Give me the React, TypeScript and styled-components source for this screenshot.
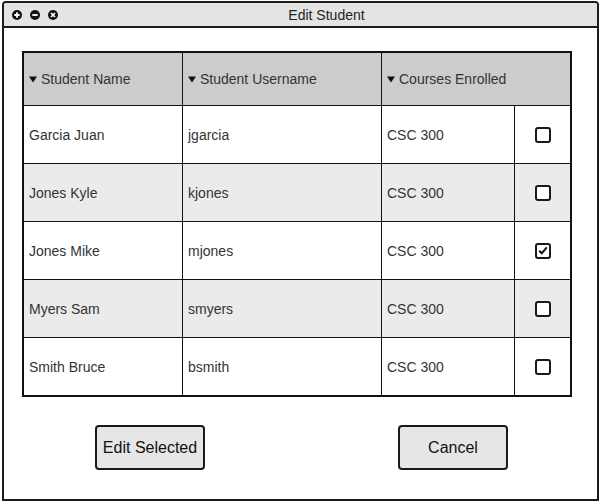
import React from "react";
import styled, { createGlobalStyle } from "styled-components";

const Global = createGlobalStyle`
  html, body { margin: 0; padding: 0; background: #ffffff; }
  body { font-family: "Liberation Sans", Arial, sans-serif; }
`;

const Window = styled.div`
  box-sizing: border-box;
  margin: 1px 0 0 2px;
  width: 597px;
  height: 500px;
  border: 2px solid #1c1c1c;
  border-radius: 4px 4px 0 0;
  background: #fff;
  display: flex;
  flex-direction: column;
`;

const TitleBar = styled.div`
  height: 23px;
  background: #e4e4e4;
  border-bottom: 2px solid #1c1c1c;
  border-radius: 2px 2px 0 0;
  display: flex;
  align-items: center;
  padding-left: 8px;
`;

const Controls = styled.div`
  display: flex;
  gap: 8px;
`;

const Title = styled.div`
  flex: 1;
  text-align: center;
  font-size: 14px;
  color: #222;
  padding-right: 2px;
`;

const Content = styled.div`
  padding: 23px 0 0 18px;
  display: flex;
  flex-direction: column;
`;

const Table = styled.div`
  box-sizing: border-box;
  width: 550px;
  border: 2px solid #111;
  display: grid;
  grid-template-columns: 158px 199px 133px 56px;
  grid-auto-rows: auto;
`;

const HeaderCell = styled.div<{ $first?: boolean; $span?: number }>`
  height: 52px;
  background: #cccccc;
  border-left: ${(p) => (p.$first ? "none" : "1px solid #111")};
  grid-column: span ${(p) => p.$span ?? 1};
  display: flex;
  align-items: center;
  padding-left: 5px;
  font-size: 14px;
  color: #333;
  gap: 4px;
`;

const Cell = styled.div<{ $first?: boolean; $alt?: boolean; $center?: boolean }>`
  height: 57px;
  border-top: 1px solid #111;
  border-left: ${(p) => (p.$first ? "none" : "1px solid #111")};
  background: ${(p) => (p.$alt ? "#ebebeb" : "#ffffff")};
  display: flex;
  align-items: center;
  justify-content: ${(p) => (p.$center ? "center" : "flex-start")};
  padding-left: ${(p) => (p.$center ? "0" : "5px")};
  font-size: 14px;
  color: #333;
`;

const Box = styled.div`
  box-sizing: border-box;
  width: 16px;
  height: 16px;
  border: 2px solid #1a1a1a;
  border-radius: 3px;
  background: #fff;
  display: flex;
  align-items: center;
  justify-content: center;
`;

const ButtonRow = styled.div`
  display: flex;
  gap: 193px;
  padding: 28px 0 0 73px;
`;

const Button = styled.button`
  box-sizing: border-box;
  width: 110px;
  height: 45px;
  border: 2px solid #1a1a1a;
  border-radius: 4px;
  background: #e6e6e6;
  font-family: "Liberation Sans", Arial, sans-serif;
  font-size: 16px;
  color: #111;
  padding: 0;
`;

const Tri = () => (
  <svg width="8" height="8" viewBox="0 0 8 8">
    <polygon points="0,1.5 8,1.5 4,7.5" fill="#111" />
  </svg>
);

const CtlIcon = ({ kind }: { kind: "plus" | "minus" | "close" }) => (
  <svg width="10" height="10" viewBox="0 0 10 10">
    <circle cx="5" cy="5" r="5" fill="#111" />
    {kind === "plus" && (
      <path d="M5 2.3V7.7M2.3 5H7.7" stroke="#fff" strokeWidth="1.8" />
    )}
    {kind === "minus" && <path d="M2.3 5H7.7" stroke="#fff" strokeWidth="1.8" />}
    {kind === "close" && (
      <path d="M3 3L7 7M7 3L3 7" stroke="#fff" strokeWidth="1.7" />
    )}
  </svg>
);

const rows = [
  { name: "Garcia Juan", user: "jgarcia", course: "CSC 300", checked: false },
  { name: "Jones Kyle", user: "kjones", course: "CSC 300", checked: false },
  { name: "Jones Mike", user: "mjones", course: "CSC 300", checked: true },
  { name: "Myers Sam", user: "smyers", course: "CSC 300", checked: false },
  { name: "Smith Bruce", user: "bsmith", course: "CSC 300", checked: false },
];

export default function App() {
  return (
    <>
      <Global />
      <Window>
        <TitleBar>
          <Controls>
            <CtlIcon kind="plus" />
            <CtlIcon kind="minus" />
            <CtlIcon kind="close" />
          </Controls>
          <Title>Edit Student</Title>
        </TitleBar>
        <Content>
          <Table>
            <HeaderCell $first>
              <Tri />
              Student Name
            </HeaderCell>
            <HeaderCell>
              <Tri />
              Student Username
            </HeaderCell>
            <HeaderCell $span={2}>
              <Tri />
              Courses Enrolled
            </HeaderCell>
            {rows.map((r, i) => {
              const alt = i % 2 === 1;
              return (
                <React.Fragment key={r.user}>
                  <Cell $first $alt={alt}>{r.name}</Cell>
                  <Cell $alt={alt}>{r.user}</Cell>
                  <Cell $alt={alt}>{r.course}</Cell>
                  <Cell $alt={alt} $center>
                    <Box>
                      {r.checked && (
                        <svg width="10" height="9" viewBox="0 0 10 9">
                          <path
                            d="M1.2 4.8L3.8 7.2L8.8 1.4"
                            stroke="#111"
                            strokeWidth="2"
                            fill="none"
                          />
                        </svg>
                      )}
                    </Box>
                  </Cell>
                </React.Fragment>
              );
            })}
          </Table>
          <ButtonRow>
            <Button>Edit Selected</Button>
            <Button>Cancel</Button>
          </ButtonRow>
        </Content>
      </Window>
    </>
  );
}
